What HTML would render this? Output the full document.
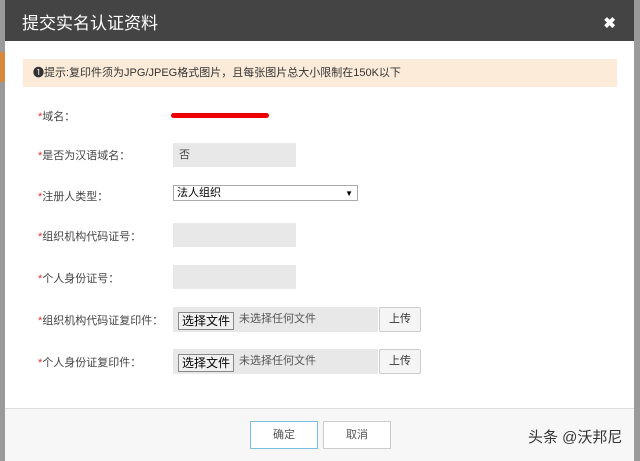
<!DOCTYPE html>
<html><head><meta charset="utf-8"><style>
body{margin:0;width:640px;height:460px;background:#9a9a9a;position:relative;overflow:hidden;font-family:"Liberation Sans","Noto Sans CJK SC",sans-serif;}
.m{position:absolute;left:5px;top:0;width:629px;height:460px;background:#fff;}
.h{position:absolute;left:0;top:0;width:629px;height:41px;background:#444;color:#fff;font-size:17px;}
.h span{position:absolute;left:17px;top:9px;}
.x{position:absolute;right:18px;top:14px;font-size:15px;font-weight:bold;}
.tip{position:absolute;left:18px;top:59px;width:594px;height:28px;background:#fcebd9;font-size:11px;color:#333;line-height:28px;padding-left:10px;box-sizing:border-box;}
.l{position:absolute;left:33px;font-size:11px;color:#444;}
.l b{color:#d33;font-weight:normal;}
.f{position:absolute;left:168px;width:123px;height:24px;background:#e8e8e8;font-size:11px;color:#444;line-height:24px;padding-left:6px;box-sizing:border-box;}
.sel{position:absolute;left:168px;top:185px;width:185px;height:16px;border:1px solid #aaa;background:#fff;font-size:11px;line-height:15px;padding-left:3px;box-sizing:border-box;}
.file{position:absolute;left:168px;width:205px;height:25px;background:#e8e8e8;font-size:11px;color:#555;}
.file i{font-style:normal;position:absolute;left:5px;top:5px;border:1px solid #888;background:#f0f0f0;padding:0 3px;height:16px;line-height:16px;color:#000;font-size:12px;}
.file s{text-decoration:none;position:absolute;left:66px;top:3px;}
.up{position:absolute;left:374px;width:40px;height:23px;border:1px solid #ccc;border-radius:2px;background:#f5f5f5;font-size:11px;text-align:center;line-height:23px;color:#333;}
.ft{position:absolute;left:0;top:408px;width:629px;height:52px;background:#f7f7f7;border-top:1px solid #ddd;}
.bt{position:absolute;top:12px;width:66px;height:26px;border:1px solid #ccc;background:#fff;font-size:11px;text-align:center;line-height:26px;color:#555;}
</style></head><body>
<div style="position:absolute;left:0;top:52px;width:5px;height:30px;background:#d8883a"></div>
<div class="m">
<div class="h"><span>提交实名认证资料</span><div class="x">✖</div></div>
<div class="tip">❶提示:复印件须为JPG/JPEG格式图片，且每张图片总大小限制在150K以下</div>
<div class="l" style="top:108px"><b>*</b>域名：</div>
<div style="position:absolute;left:166px;top:113px;width:98px;height:5px;background:#e00;border-radius:3px"></div>
<div class="l" style="top:147px"><b>*</b>是否为汉语域名：</div>
<div class="f" style="top:143px">否</div>
<div class="l" style="top:188px"><b>*</b>注册人类型：</div>
<div class="sel">法人组织<span style="position:absolute;right:4px;font-size:8px">▼</span></div>
<div class="l" style="top:228px"><b>*</b>组织机构代码证号：</div>
<div class="f" style="top:223px"></div>
<div class="l" style="top:270px"><b>*</b>个人身份证号：</div>
<div class="f" style="top:265px"></div>
<div class="l" style="top:312px"><b>*</b>组织机构代码证复印件：</div>
<div class="file" style="top:307px"><i>选择文件</i><s>未选择任何文件</s></div>
<div class="up" style="top:307px">上传</div>
<div class="l" style="top:354px"><b>*</b>个人身份证复印件：</div>
<div class="file" style="top:349px"><i>选择文件</i><s>未选择任何文件</s></div>
<div class="up" style="top:349px">上传</div>
<div class="ft">
<div class="bt" style="left:245px;border-color:#7bbfe0">确定</div>
<div class="bt" style="left:318px">取消</div>
</div>
</div>
<div style="position:absolute;left:528px;top:426px;font-size:15px;color:#333">头条 @沃邦尼</div>
</body></html>
